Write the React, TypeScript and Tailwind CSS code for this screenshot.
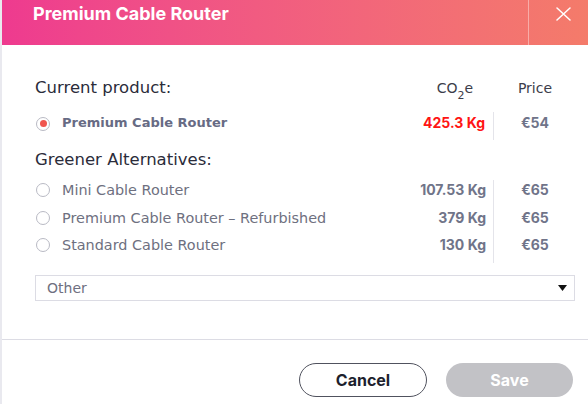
import React from "react";

const sans = { fontFamily: "Inter, 'DejaVu Sans', sans-serif" };
const wide = { fontFamily: "'DejaVu Sans', Inter, sans-serif" };

function Radio({ checked }: { checked?: boolean }) {
  return (
    <span className="flex h-[14px] w-[14px] shrink-0 items-center justify-center rounded-full border border-[#b9bac4] bg-white">
      {checked && <span className="h-[7px] w-[7px] rounded-full bg-[#f0564f]" />}
    </span>
  );
}

const alts = [
  { name: "Mini Cable Router", co2: "107.53 Kg", price: "€65" },
  { name: "Premium Cable Router – Refurbished", co2: "379 Kg", price: "€65" },
  { name: "Standard Cable Router", co2: "130 Kg", price: "€65" },
];

export default function App() {
  return (
    <div className="h-[404px] w-[588px] overflow-hidden bg-white" style={sans}>
      <div className="flex h-full flex-col border-l-2 border-[#e9e9ef]">
        <div className="flex h-[45px] shrink-0 items-stretch bg-gradient-to-r from-[#ee3a8f] to-[#f47b6a]">
          <div className="flex-1 pl-[31px] pt-[5px] text-[18px] font-bold leading-[18px] text-white">
            Premium Cable Router
          </div>
          <div className="w-[60px] border-l border-white/40 pl-[27px] pt-[7px]">
            <svg width="15" height="14" viewBox="0 0 15 14" fill="none" stroke="white" strokeWidth="1.5" strokeLinecap="round">
              <path d="M1 1 L14 13 M14 1 L1 13" />
            </svg>
          </div>
        </div>

        <div className="px-[33px] pr-[12px]">
          <div className="mt-[33px] flex h-[20px] items-center leading-[20px]" style={wide}>
            <div className="flex-1 text-[16.5px] text-[#2b2c3a]">Current product:</div>
            <div className="w-[78px] text-center text-[14px] text-[#3c3d4a]">
              CO<sub className="align-[-3px] text-[11px]">2</sub>e
            </div>
            <div className="w-[82px] text-center text-[14px] text-[#3c3d4a]">Price</div>
          </div>

          <div className="mt-[14px] flex h-[28px] items-start leading-[22px]">
            <div className="flex flex-1 items-center gap-[12px] pl-[1px]">
              <span className="mt-[1px]"><Radio checked /></span>
              <span className="text-[13px] font-bold text-[#676b84]" style={wide}>Premium Cable Router</span>
            </div>
            <div className="h-full w-[78px] border-r border-[#e4e4ea] pr-[8px] text-right text-[14px] font-bold text-[#ff1414]">
              425.3 Kg
            </div>
            <div className="w-[82px] text-center text-[14px] font-bold text-[#707489]">€54</div>
          </div>

          <div className="mt-[10px] h-[20px] text-[16.5px] leading-[20px] text-[#2b2c3a]" style={wide}>
            Greener Alternatives:
          </div>

          <div className="mt-[10px] flex">
            <div className="flex-1">
              {alts.map((a) => (
                <div key={a.name} className="flex h-[27.5px] items-start gap-[12px] pl-[1px] leading-[20px]">
                  <span className="mt-[3px]"><Radio /></span>
                  <span className="text-[14.4px] text-[#6e7080]" style={wide}>{a.name}</span>
                </div>
              ))}
            </div>
            <div className="w-[78px] border-r border-[#e4e4ea] pr-[7px]">
              {alts.map((a) => (
                <div key={a.name} className="h-[27.5px] text-right text-[14px] font-bold leading-[20px] text-[#707489]">
                  {a.co2}
                </div>
              ))}
            </div>
            <div className="w-[82px]">
              {alts.map((a) => (
                <div key={a.name} className="h-[27.5px] text-center text-[14px] font-bold leading-[20px] text-[#707489]">
                  {a.price}
                </div>
              ))}
            </div>
          </div>

          <div className="mt-[12.5px] mr-[1px] flex h-[26px] items-center border border-[#dcdce4] pl-[11px] pr-[7px]">
            <span className="flex-1 text-[14px] text-[#6e7080]" style={wide}>Other</span>
            <svg width="9" height="6" viewBox="0 0 9 6"><path d="M0 0 H9 L4.5 6 Z" fill="#111" /></svg>
          </div>
        </div>

        <div className="mt-[38px] h-px bg-[#dcdce4]" />

        <div className="mt-[23px] flex justify-end gap-[19px] pr-[15px]">
          <button className="h-[34px] w-[128px] rounded-full border-[1.5px] border-[#50525e] text-[16px] font-bold text-[#1d1f2e]">
            Cancel
          </button>
          <button className="h-[34px] w-[127px] rounded-full bg-[#c2c2c6] text-[16px] font-bold text-white">
            Save
          </button>
        </div>
      </div>
    </div>
  );
}
